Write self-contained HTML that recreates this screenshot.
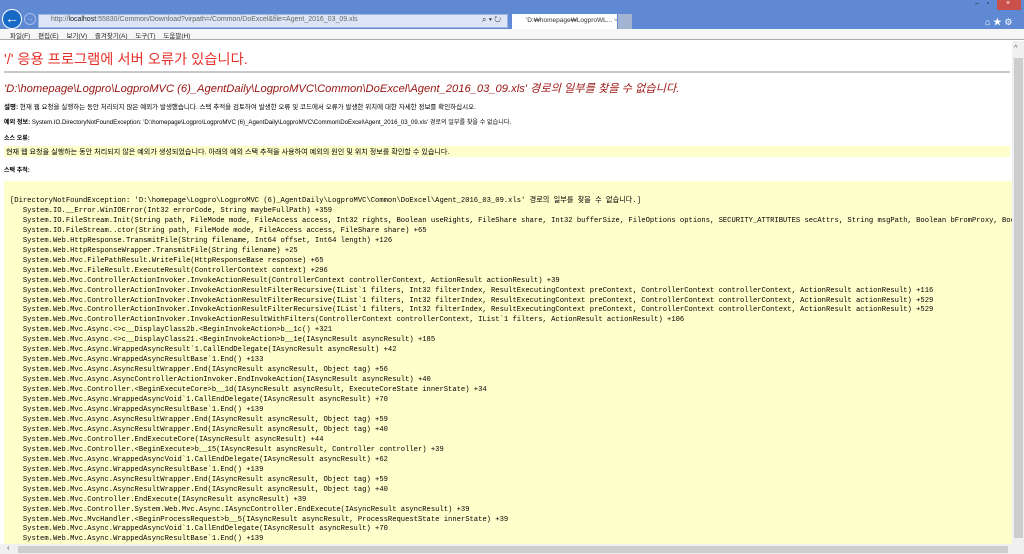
<!DOCTYPE html>
<html><head><meta charset="utf-8"><style>
*{margin:0;padding:0;box-sizing:border-box}
body{width:1024px;height:554px;overflow:hidden;background:#fff;position:relative;font-family:"Liberation Sans","Noto Sans CJK KR",sans-serif}
.abs{position:absolute}
.k{font-family:"Liberation Sans","Noto Sans CJK KR",sans-serif}
pre{font-family:"Liberation Mono","Noto Sans CJK KR",monospace;font-size:7.16px;line-height:9.95px;color:#000;white-space:pre}
.sm{font-size:6px;color:#000;white-space:nowrap}
</style></head><body>
<div class="abs" style="left:0;top:0;width:1024px;height:29px;background:#5f8ad3"></div>
<div class="abs" style="left:2px;top:9px;width:20px;height:20px;border-radius:50%;background:#1769c6;border:1px solid #fff;color:#fff;font-size:14px;line-height:17px;text-align:center;font-weight:bold">←</div>
<div class="abs" style="left:24px;top:13px;width:12px;height:12px;border-radius:50%;border:1px solid #a8bde6;color:#a8bde6;font-size:8px;line-height:10px;text-align:center">→</div>
<div class="abs" style="left:38px;top:14px;width:470px;height:14px;background:#dbe5f6;border:1px solid #9fb6e0"></div>
<div class="abs k" style="left:51px;top:16px;font-size:7px;color:#666;white-space:nowrap">http://<b style="color:#222;font-weight:normal">localhost</b>:55830/Common/Download?virpath=/Common/DoExcel&amp;file=Agent_2016_03_09.xls</div>
<div class="abs k" style="left:482px;top:15px;font-size:8px;color:#333">⌕ ▾ ↻</div>
<div class="abs" style="left:512px;top:14px;width:105px;height:15px;background:#fff"></div>
<div class="abs k" style="left:526px;top:17px;font-size:6.5px;color:#333;white-space:nowrap">'D:₩homepage₩LogproWL... <span style="color:#888">×</span></div>
<div class="abs" style="left:618px;top:14px;width:14px;height:15px;background:#a3b4d3"></div>
<div class="abs" style="left:997px;top:0;width:24px;height:10px;background:#c9504b"></div>
<div class="abs k" style="left:1006px;top:0;font-size:7px;color:#fff">×</div>
<div class="abs k" style="left:975px;top:0;font-size:7px;color:#222">–&nbsp;&nbsp;&nbsp;&nbsp;▫</div>
<div class="abs k" style="left:985px;top:15px;font-size:9px;color:#fff">⌂ ★ ⚙</div>
<div class="abs" style="left:0;top:29px;width:1024px;height:11px;background:#f6f6f6;border-bottom:1px solid #aaa"></div>
<div class="abs k" style="left:10px;top:30px;font-size:6.5px;color:#222;white-space:nowrap;word-spacing:6px">파일(F) 편집(E) 보기(V) 즐겨찾기(A) 도구(T) 도움말(H)</div>

<div class="abs k" style="left:4px;top:48px;font-size:14.3px;color:#e8312a;white-space:nowrap">'/' 응용 프로그램에 서버 오류가 있습니다.</div>
<div class="abs" style="left:4px;top:71px;width:1006px;height:2px;background:#c8c8c8"></div>
<div class="abs k" style="left:4px;top:80px;font-size:11.2px;color:#9a1412;font-style:italic;white-space:nowrap">'D:\homepage\Logpro\LogproMVC (6)_AgentDaily\LogproMVC\Common\DoExcel\Agent_2016_03_09.xls' 경로의 일부를 찾을 수 없습니다.</div>
<div class="abs sm" style="left:4px;top:101px;font-size:6.5px"><b>설명:</b> 현재 웹 요청을 실행하는 동안 처리되지 않은 예외가 발생했습니다. 스택 추적을 검토하여 발생한 오류 및 코드에서 오류가 발생한 위치에 대한 자세한 정보를 확인하십시오.</div>
<div class="abs sm" style="left:4px;top:117px;font-size:6.1px"><b>예외 정보:</b> System.IO.DirectoryNotFoundException: 'D:\homepage\Logpro\LogproMVC (6)_AgentDaily\LogproMVC\Common\DoExcel\Agent_2016_03_09.xls' 경로의 일부를 찾을 수 없습니다.</div>
<div class="abs sm" style="left:4px;top:133px"><b>소스 오류:</b></div>
<div class="abs" style="left:4px;top:146px;width:1006px;height:11px;background:#ffffcc"></div>
<div class="abs sm" style="left:6px;top:147px;font-size:7.1px">현재 웹 요청을 실행하는 동안 처리되지 않은 예외가 생성되었습니다. 아래의 예외 스택 추적을 사용하여 예외의 원인 및 위치 정보를 확인할 수 있습니다.</div>
<div class="abs sm" style="left:4px;top:165px"><b>스택 추적:</b></div>
<div class="abs" style="left:4px;top:181px;width:1008px;height:363px;background:#ffffcc;overflow:hidden">
<pre style="position:absolute;left:6px;top:16px">[DirectoryNotFoundException: 'D:\homepage\Logpro\LogproMVC (6)_AgentDaily\LogproMVC\Common\DoExcel\Agent_2016_03_09.xls' 경로의 일부를 찾을 수 없습니다.]
   System.IO.__Error.WinIOError(Int32 errorCode, String maybeFullPath) +359
   System.IO.FileStream.Init(String path, FileMode mode, FileAccess access, Int32 rights, Boolean useRights, FileShare share, Int32 bufferSize, FileOptions options, SECURITY_ATTRIBUTES secAttrs, String msgPath, Boolean bFromProxy, Boolean useLongPath, Boolean checkHost) +1305
   System.IO.FileStream..ctor(String path, FileMode mode, FileAccess access, FileShare share) +65
   System.Web.HttpResponse.TransmitFile(String filename, Int64 offset, Int64 length) +126
   System.Web.HttpResponseWrapper.TransmitFile(String filename) +25
   System.Web.Mvc.FilePathResult.WriteFile(HttpResponseBase response) +65
   System.Web.Mvc.FileResult.ExecuteResult(ControllerContext context) +296
   System.Web.Mvc.ControllerActionInvoker.InvokeActionResult(ControllerContext controllerContext, ActionResult actionResult) +39
   System.Web.Mvc.ControllerActionInvoker.InvokeActionResultFilterRecursive(IList`1 filters, Int32 filterIndex, ResultExecutingContext preContext, ControllerContext controllerContext, ActionResult actionResult) +116
   System.Web.Mvc.ControllerActionInvoker.InvokeActionResultFilterRecursive(IList`1 filters, Int32 filterIndex, ResultExecutingContext preContext, ControllerContext controllerContext, ActionResult actionResult) +529
   System.Web.Mvc.ControllerActionInvoker.InvokeActionResultFilterRecursive(IList`1 filters, Int32 filterIndex, ResultExecutingContext preContext, ControllerContext controllerContext, ActionResult actionResult) +529
   System.Web.Mvc.ControllerActionInvoker.InvokeActionResultWithFilters(ControllerContext controllerContext, IList`1 filters, ActionResult actionResult) +106
   System.Web.Mvc.Async.&lt;&gt;c__DisplayClass2b.&lt;BeginInvokeAction&gt;b__1c() +321
   System.Web.Mvc.Async.&lt;&gt;c__DisplayClass21.&lt;BeginInvokeAction&gt;b__1e(IAsyncResult asyncResult) +185
   System.Web.Mvc.Async.WrappedAsyncResult`1.CallEndDelegate(IAsyncResult asyncResult) +42
   System.Web.Mvc.Async.WrappedAsyncResultBase`1.End() +133
   System.Web.Mvc.Async.AsyncResultWrapper.End(IAsyncResult asyncResult, Object tag) +56
   System.Web.Mvc.Async.AsyncControllerActionInvoker.EndInvokeAction(IAsyncResult asyncResult) +40
   System.Web.Mvc.Controller.&lt;BeginExecuteCore&gt;b__1d(IAsyncResult asyncResult, ExecuteCoreState innerState) +34
   System.Web.Mvc.Async.WrappedAsyncVoid`1.CallEndDelegate(IAsyncResult asyncResult) +70
   System.Web.Mvc.Async.WrappedAsyncResultBase`1.End() +139
   System.Web.Mvc.Async.AsyncResultWrapper.End(IAsyncResult asyncResult, Object tag) +59
   System.Web.Mvc.Async.AsyncResultWrapper.End(IAsyncResult asyncResult, Object tag) +40
   System.Web.Mvc.Controller.EndExecuteCore(IAsyncResult asyncResult) +44
   System.Web.Mvc.Controller.&lt;BeginExecute&gt;b__15(IAsyncResult asyncResult, Controller controller) +39
   System.Web.Mvc.Async.WrappedAsyncVoid`1.CallEndDelegate(IAsyncResult asyncResult) +62
   System.Web.Mvc.Async.WrappedAsyncResultBase`1.End() +139
   System.Web.Mvc.Async.AsyncResultWrapper.End(IAsyncResult asyncResult, Object tag) +59
   System.Web.Mvc.Async.AsyncResultWrapper.End(IAsyncResult asyncResult, Object tag) +40
   System.Web.Mvc.Controller.EndExecute(IAsyncResult asyncResult) +39
   System.Web.Mvc.Controller.System.Web.Mvc.Async.IAsyncController.EndExecute(IAsyncResult asyncResult) +39
   System.Web.Mvc.MvcHandler.&lt;BeginProcessRequest&gt;b__5(IAsyncResult asyncResult, ProcessRequestState innerState) +39
   System.Web.Mvc.Async.WrappedAsyncVoid`1.CallEndDelegate(IAsyncResult asyncResult) +70
   System.Web.Mvc.Async.WrappedAsyncResultBase`1.End() +139</pre>
</div>
<div class="abs" style="left:1012px;top:41px;width:12px;height:513px;background:#f0f0f0"></div>
<div class="abs" style="left:1014px;top:58px;width:9px;height:480px;background:#cdcdcd"></div>
<div class="abs k" style="left:1014px;top:45px;font-size:7px;color:#555">^</div>
<div class="abs" style="left:0;top:544px;width:1012px;height:10px;background:#f0f0f0"></div>
<div class="abs" style="left:18px;top:546px;width:990px;height:7px;background:#cdcdcd"></div>
<div class="abs k" style="left:7px;top:543px;font-size:8px;color:#555">‹</div>
</body></html>
